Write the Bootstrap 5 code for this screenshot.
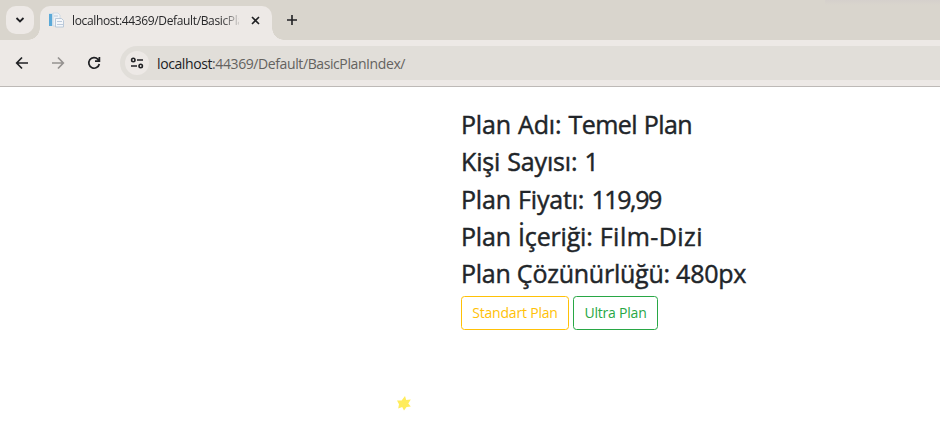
<!DOCTYPE html>
<html lang="tr">
<head>
<meta charset="utf-8">
<meta name="viewport" content="width=device-width, initial-scale=1">
<title>Basic Plan</title>
<link href="https://cdn.jsdelivr.net/npm/bootstrap@5.3.0/dist/css/bootstrap.min.css" rel="stylesheet">
<style>
body{font-family:"Open Sans","Noto Sans",sans-serif;background:#fff;height:439px;overflow:hidden}
svg{display:block;flex:none}
.tabstrip{height:40px;background:linear-gradient(#d5d0cc,#d9d4cd00) right top/115px 5px no-repeat,#d9d5cd;padding:6px 0 0 6px}
.tab-search{width:28px;height:28px;border-radius:10px;background:#ede9e6}
.browser-tab{width:232px;height:34px;margin-left:6px;padding:0 12px 6px 8px;border-radius:10px 10px 0 0;background:#ede9e6}
.browser-tab::before,.browser-tab::after{content:"";position:absolute;bottom:0;width:12px;height:12px}
.browser-tab::before{left:-12px;background:radial-gradient(circle at 0 0,#0000 11.5px,#ede9e6 12px)}
.browser-tab::after{right:-12px;background:radial-gradient(circle at 100% 0,#0000 11.5px,#ede9e6 12px)}
.tab-title{width:167px;margin-left:7px;padding-top:1px;font-size:12px;line-height:16px;letter-spacing:-.36px;color:#28282a;-webkit-mask-image:linear-gradient(90deg,#000 149px,transparent 170px);mask-image:linear-gradient(90deg,#000 149px,transparent 170px)}
.new-tab{margin:0 0 6px 14px}
.toolbar{height:47px;background:#ede9e6;border-bottom:1px solid #bdb9b6;padding-left:14px}
.toolbar-icons{gap:20px}
.address{height:34px;margin-left:18px;padding-left:5px;border-radius:17px 0 0 17px;background:#e1ded9}
.site-info{width:24px;height:24px;border-radius:50%;background:#ede9e6}
.url{margin-left:8px;padding-top:1px;font-size:14px;line-height:20px;letter-spacing:-.4px;color:#64625f}
.url span{color:#202124}
.plan{margin-left:461px;padding-top:22px}
.plan h4{font-size:25px;line-height:30px;margin-bottom:7.3px;font-weight:500;color:#212529;white-space:nowrap;letter-spacing:-.17px;word-spacing:.8px;-webkit-text-stroke:.45px #212529}
.plan h4 .plan-name{letter-spacing:-.55px}
.plan h4 .price{letter-spacing:-1.4px}
.plan h4 .kind{letter-spacing:.45px}
.plan h4.resolution{letter-spacing:-.24px;word-spacing:0}
.plan-actions{padding-top:1px}
.plan-btn{height:34px;padding:0;font-size:14px;line-height:32px;border-radius:3.5px;letter-spacing:-.2px}
.btn-std{width:108px;--bs-btn-color:#ffc107;--bs-btn-border-color:#ffc107}
.btn-ultra{width:85px;--bs-btn-color:#28a745;--bs-btn-border-color:#28a745}
.star{margin:66px 0 0 397px}
</style>
<script src="https://cdn.jsdelivr.net/npm/bootstrap@5.3.0/dist/js/bootstrap.bundle.min.js"></script>
</head>
<body>
<header>
<div class="tabstrip d-flex">
<div class="tab-search d-flex align-items-center justify-content-center"><svg width="10" height="8" fill="none" stroke="#202124" stroke-width="1.8"><path d="M1.5 2 5 5.5 8.5 2"/></svg></div>
<div class="browser-tab d-flex align-items-center position-relative">
<svg width="17" height="17"><path d="M1 1h7v13H1z" fill="#d3e2ec"/><path d="M1 2h3v12H1z" fill="#5ba9d8"/><path d="M5 1h5l2 2v11H5z" fill="#f0f3f6" stroke="#c8d5e2" stroke-width=".8"/><path d="M7.500 6.500h6l2 2v6.500h-8z" fill="#f5f7fa" stroke="#b3c4d6" stroke-width=".9"/><path d="M9 9.500h5M9 12.500h6M6 4h4" stroke="#bccadc"/></svg>
<div class="tab-title text-nowrap overflow-hidden">localhost:44369/Default/BasicPlanIndex/</div>
<svg class="ms-auto" width="9" height="9" stroke="#202124" stroke-width="1.6"><path d="m1 1 7 7M8 1 1 8"/></svg>
</div>
<div class="new-tab d-flex align-items-center"><svg width="12" height="12" stroke="#202124" stroke-width="1.6"><path d="M6 1v10M1 6h10"/></svg></div>
</div>
<div class="toolbar d-flex align-items-center">
<div class="toolbar-icons d-flex">
<svg width="16" height="16" fill="none" stroke="#202124" stroke-width="1.7"><path d="M14 8H3M8 2.500 2.700 8 8 13.500"/></svg>
<svg width="16" height="16" fill="none" stroke="#959290" stroke-width="1.7"><path d="M2 8h11M8 2.500 13.300 8 8 13.500"/></svg>
<svg width="16" height="16" fill="none" stroke="#202124" stroke-width="1.7"><path d="M13.300 9A5.300 5.300 0 1 1 12 4.300L13 5.700M13.400 2v4.200H9"/></svg>
</div>
<div class="address flex-grow-1 d-flex align-items-center">
<div class="site-info d-flex align-items-center justify-content-center"><svg width="14" height="12" fill="none" stroke="#202124" stroke-width="1.6"><circle cx="3.300" cy="3" r="1.700"/><path d="M7 3h6M1 9h6"/><circle cx="10.700" cy="9" r="1.700"/></svg></div>
<div class="url text-nowrap"><span>localhost</span>:44369/Default/BasicPlanIndex/</div>
</div>
</div>
</header>
<main>
<div class="plan">
<h4>Plan Adı: <span class="plan-name">Temel Plan</span></h4>
<h4>Kişi Sayısı: 1</h4>
<h4>Plan Fiyatı: <span class="price">119,99</span></h4>
<h4>Plan İçeriği: <span class="kind">Film-Dizi</span></h4>
<h4 class="resolution">Plan Çözünürlüğü: 480px</h4>
<div class="plan-actions d-flex gap-1"><a class="btn plan-btn btn-std btn-outline-warning" href="#">Standart Plan</a><a class="btn plan-btn btn-ultra btn-outline-success" href="#">Ultra Plan</a></div>
</div>
<svg class="star" width="14" height="15" fill="#ffec5c"><path d="m8 0 1.200 4 4.600-.4-2.500 3.800 2.500 3.200-4.200.3L7 14.500l-1.800-3.400-4 1.500L2 8.300 0 4.400l4.600.2z"/></svg>
</main>
</body>
</html>
